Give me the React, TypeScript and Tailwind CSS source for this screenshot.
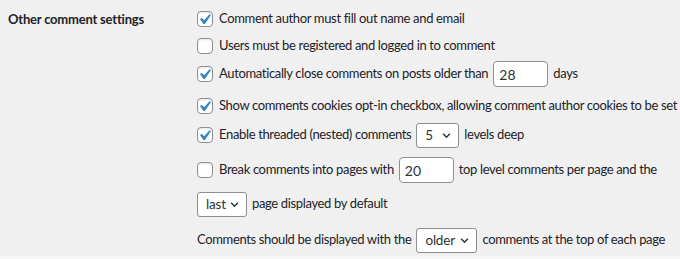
import type { ReactNode } from 'react';

const FONT = 'Lato, "Liberation Sans", Arial, sans-serif';

function Check({ checked }: { checked?: boolean }) {
  return (
    <span className="relative mr-[6px] inline-block h-4 w-4 shrink-0 rounded-[4px] border border-[#8c8f94] bg-white shadow-[inset_0_1px_2px_rgba(0,0,0,0.1)]">
      {checked && (
        <svg viewBox="0 0 20 20" className="absolute left-[-4px] top-[-3px] h-[21px] w-[21px]">
          <path d="M14.83 4.89l1.34.94-5.81 8.38H9.02L5.78 9.67l1.34-1.25 2.57 2.4z" fill="#3582c4" />
        </svg>
      )}
    </span>
  );
}

function NumberBox({ value }: { value: string }) {
  return (
    <span className="mx-[5px] inline-flex h-[26px] w-[55px] shrink-0 items-center rounded-[4px] border border-[#8c8f94] bg-white pl-[5px] text-[14px] tracking-normal text-[#2c3338]">
      {value}
    </span>
  );
}

function Select({ value, width, className = '' }: { value: string; width: string; className?: string }) {
  return (
    <span
      className={`inline-flex h-[25px] shrink-0 items-center justify-between rounded-[3px] border border-[#8c8f94] bg-white pl-[8px] pr-[7px] text-[13.5px] tracking-[-0.2px] text-[#2c3338] ${width} ${className}`}
    >
      <span>{value}</span>
      <svg viewBox="0 0 10 6" className="h-[5px] w-[9px]">
        <path d="M1 1l4 4 4-4" fill="none" stroke="#2c3338" strokeWidth="1.8" />
      </svg>
    </span>
  );
}

function Row({ children, className = '' }: { children: ReactNode; className?: string }) {
  return <div className={`flex h-[26px] items-center whitespace-nowrap ${className}`}>{children}</div>;
}

export default function App() {
  return (
    <div
      className="flex h-[259px] w-[680px] flex-col overflow-hidden bg-[#f0f0f1] text-[13px] tracking-[-0.35px] text-[#1d2327]"
      style={{ fontFamily: FONT }}
    >
      <div className="flex flex-1">
        <div className="w-[197px] shrink-0 pl-2 pt-[10px] text-[13px] font-bold tracking-[-0.2px]">
          Other comment settings
        </div>

        <div className="flex flex-col pt-[6px]">
          <Row>
            <Check checked />
            Comment author must fill out name and email
          </Row>
          <Row className="mt-[1px]">
            <Check />
            Users must be registered and logged in to comment
          </Row>
          <Row className="mt-[2px]">
            <Check checked />
            Automatically close comments on posts older than
            <NumberBox value="28" />
            days
          </Row>
          <Row className="mt-[6px]">
            <Check checked />
            Show comments cookies opt-in checkbox, allowing comment author cookies to be set
          </Row>
          <Row className="mt-[3px]">
            <Check checked />
            Enable threaded (nested) comments
            <Select value="5" width="w-[43px]" className="mx-[5px]" />
            levels deep
          </Row>
          <Row className="mt-[9px]">
            <Check />
            Break comments into pages with
            <NumberBox value="20" />
            top level comments per page and the
          </Row>
          <Row className="mt-[8px]">
            <Select value="last" width="w-[50px]" className="mr-[5px]" />
            page displayed by default
          </Row>
          <Row className="mt-[10px]">
            Comments should be displayed with the
            <Select value="older" width="w-[61px]" className="mx-[5px]" />
            comments at the top of each page
          </Row>
        </div>
      </div>
      <div className="h-[3px] bg-[#f6f6f6]" />
    </div>
  );
}
